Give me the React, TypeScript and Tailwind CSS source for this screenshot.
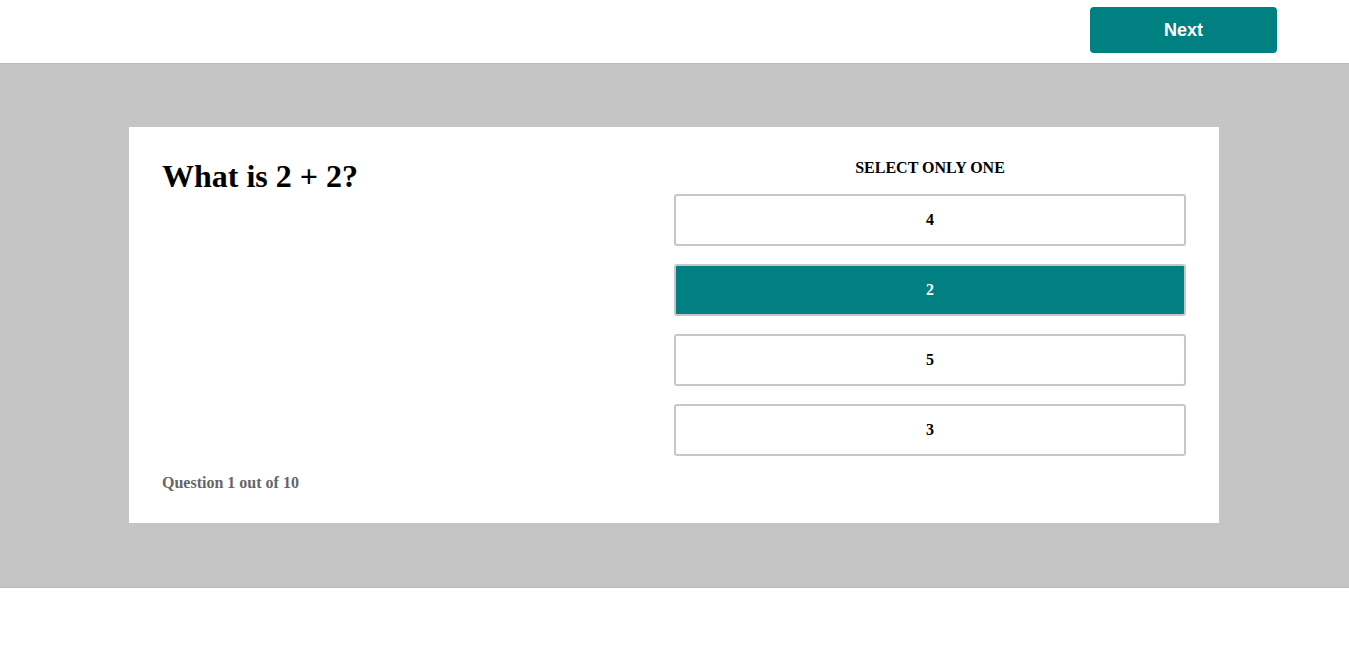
import { useState } from "react";

const options = ["4", "2", "5", "3"];

export default function App() {
  const [selected, setSelected] = useState(1);

  return (
    <div className="min-h-screen bg-white font-['Liberation_Serif',serif]">
      <header className="h-[63px] flex justify-end pt-[7px] pr-[72px]">
        <button className="w-[187px] h-[46px] rounded-[4px] bg-[#008080] text-white text-[18px] font-bold font-['Liberation_Sans',Arial,sans-serif] pt-[1px]">
          Next
        </button>
      </header>

      <section className="bg-[#c6c5c6] border-y border-[#bababa] pt-[63px] pb-[64px]">
        <div className="ml-[129px] w-[1090px] h-[396px] bg-white px-[33px] pt-[31px] pb-[31px] grid grid-cols-2">
          <div className="flex flex-col justify-between">
            <h1 className="text-[32px] font-bold text-black leading-[37px]">What is 2 + 2?</h1>
            <p className="text-[16px] font-bold text-[#666666] leading-[18px]">Question 1 out of 10</p>
          </div>

          <div className="flex flex-col pt-[1px]">
            <p className="text-center text-[16px] font-bold text-black leading-[18px] mb-[17px]">
              SELECT ONLY ONE
            </p>
            <div className="flex flex-col gap-[18px]">
              {options.map((opt, i) => (
                <button
                  key={opt}
                  onClick={() => setSelected(i)}
                  className={
                    i === selected
                      ? "h-[52px] rounded-[3px] border-2 border-[#c9c5c8] bg-[#008080] text-white text-[16px] font-bold"
                      : "h-[52px] rounded-[3px] border-2 border-[#c9c5c8] bg-white text-black text-[16px] font-bold"
                  }
                >
                  {opt}
                </button>
              ))}
            </div>
          </div>
        </div>
      </section>
    </div>
  );
}
